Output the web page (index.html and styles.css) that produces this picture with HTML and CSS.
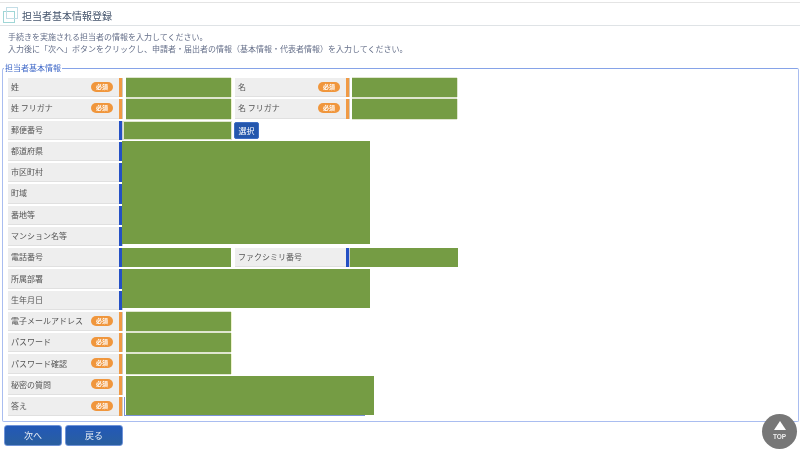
FILE: index.html
```html
<!DOCTYPE html>
<html lang="ja">
<head>
<meta charset="utf-8">
<title>担当者基本情報登録</title>
<link rel="stylesheet" href="styles.css">
</head>
<body>
<header class="page-head">
  <svg class="head-icon" width="15" height="17" viewBox="0 0 15 17" aria-hidden="true">
    <rect x="0.5" y="4.5" width="11" height="11" fill="none" stroke="#9fd6d6"/>
    <rect x="3.5" y="0.5" width="11" height="11" fill="none" stroke="#c3dde6"/>
  </svg>
  <h1 class="title">担当者基本情報登録</h1>
</header>
<div class="intro">
  <p>手続きを実施される担当者の情報を入力してください。</p>
  <p>入力後に「次へ」ボタンをクリックし、申請者・届出者の情報（基本情報・代表者情報）を入力してください。</p>
</div>
<fieldset class="panel">
  <legend class="legend">担当者基本情報</legend>
  <div class="form-grid">
    <div class="label r1"><span>姓</span><b class="req">必須</b></div><i class="mark must r1"></i><div class="fill f-short r1"></div>
    <div class="label c2 r1"><span>名</span><b class="req">必須</b></div><i class="mark must c2m r1"></i><div class="fill f-right r1"></div>

    <div class="label r2"><span>姓 フリガナ</span><b class="req">必須</b></div><i class="mark must r2"></i><div class="fill f-short r2"></div>
    <div class="label c2 r2"><span>名 フリガナ</span><b class="req">必須</b></div><i class="mark must c2m r2"></i><div class="fill f-right r2"></div>

    <div class="label r3"><span>郵便番号</span></div><i class="mark opt r3"></i><div class="fill f-zip r3"></div>
    <div class="btn-cell r3"><button class="pick" type="button">選択</button></div>

    <div class="label r4"><span>都道府県</span></div><i class="mark opt r4"></i>
    <div class="label r5"><span>市区町村</span></div><i class="mark opt r5"></i>
    <div class="label r6"><span>町域</span></div><i class="mark opt r6"></i>
    <div class="label r7"><span>番地等</span></div><i class="mark opt r7"></i>
    <div class="label r8"><span>マンション名等</span></div><i class="mark opt r8"></i>
    <div class="fill f-address"></div>

    <div class="label r9"><span>電話番号</span></div><i class="mark opt r9"></i><div class="fill f-tel r9"></div>
    <div class="label c2 r9"><span>ファクシミリ番号</span></div><i class="mark opt c2m r9"></i><div class="fill f-fax r9"></div>

    <div class="label r10"><span>所属部署</span></div><i class="mark opt r10"></i>
    <div class="label r11"><span>生年月日</span></div><i class="mark opt r11"></i>
    <div class="fill f-dept"></div>

    <div class="label r12"><span>電子メールアドレス</span><b class="req">必須</b></div><i class="mark must r12"></i><div class="fill f-short r12"></div>
    <div class="label r13"><span>パスワード</span><b class="req">必須</b></div><i class="mark must r13"></i><div class="fill f-short r13"></div>
    <div class="label r14"><span>パスワード確認</span><b class="req">必須</b></div><i class="mark must r14"></i><div class="fill f-short r14"></div>

    <div class="label r15"><span>秘密の質問</span><b class="req">必須</b></div><i class="mark must r15"></i>
    <div class="label r16"><span>答え</span><b class="req">必須</b></div><i class="mark must r16"></i>
    <div class="answer-edge"></div>
    <div class="fill f-secret"></div>
  </div>
</fieldset>
<div class="actions">
  <button class="nav-btn" type="button">次へ</button>
  <button class="nav-btn" type="button">戻る</button>
</div>
<a class="to-top" href="#"><span class="top-arrow"></span><span class="top-text">TOP</span></a>
</body>
</html>
```
FILE: styles.css
```css
* { box-sizing: border-box; }
html, body { margin: 0; height: 451px; overflow: hidden; background: #fff; }
body {
  position: relative;
  font-family: "Noto Sans CJK JP", "Noto Sans", sans-serif;
  font-size: 8px;
  color: #555;
  padding-top: 2px;
  filter: blur(0.35px);
}
.page-head {
  display: flex;
  align-items: center;
  gap: 4px;
  height: 24px;
  padding: 3px 0 0 3px;
  border-top: 1px solid #e4e4e4;
  border-bottom: 1px solid #dfe3e6;
}
.head-icon { flex: none; }
.title { margin: 0; font-size: 10px; font-weight: 400; line-height: 14px; color: #44546c; }
.intro { padding: 5px 0 0 8px; height: 38px; color: #66708a; }
.intro p { margin: 0; height: 12px; line-height: 12px; font-size: 8px; }
.panel {
  margin: 0 1px 0 2px;
  padding: 0 0 0 5px;
  height: 358px;
  border: 1px solid #a9bdf0;
  border-top-color: #86a3e8;
  border-radius: 2px;
}
.legend { margin-left: -4px; padding: 0 1px; font-size: 8px; line-height: 8px; height: 8px; color: #3f68c8; }
.form-grid {
  display: grid;
  grid-template-columns: 111px 3px 3px 106px 4px 111px 3px 2px 106px;
  grid-auto-rows: 19.27px;
  row-gap: 2px;
  margin-top: 6px;
}
.label {
  grid-column: 1;
  display: flex;
  align-items: center;
  justify-content: space-between;
  padding: 0 6px 1px 3px;
  background: #eee;
  border-bottom: 1px solid #e0e0e0;
  color: #555;
  white-space: nowrap;
}
.label.c2 { grid-column: 6; }
.mark { grid-column: 2; display: block; }
.mark.c2m { grid-column: 7; }
.must { background: #f09a45; box-shadow: 1px 0 0 #d2cabe; }
.opt { background: #2450c4; box-shadow: 1px 0 0 #c9ccd2; }
.req {
  width: 22px;
  height: 10px;
  border-radius: 5px;
  background: #f0963c;
  color: #fff;
  font-size: 6px;
  font-weight: 700;
  line-height: 10px;
  text-align: center;
}
.fill { background: #759c44; }
.f-short { grid-column: 4; margin-left: 1px; box-shadow: 1px 0 0 #eef2cc, 0 1px 0 #dfe6cf, 0 -1px 0 #dfe6cf; }
.f-right { grid-column: 9; margin-left: 1px; box-shadow: 1px 0 0 #dfe6cf, 0 1px 0 #dfe6cf, 0 -1px 0 #dfe6cf; }
.f-zip { grid-column: 3 / 5; margin: 1px 0 1px 2px; box-shadow: 0 0 0 1px #dfe6cf; }
.f-address { grid-column: 3 / 10; grid-row: 4 / 9; margin: -1px 87px 2px 0; }
.f-tel { grid-column: 3 / 5; }
.f-fax { grid-column: 8 / 10; margin-right: -1px; margin-left: 1px; }
.f-dept { grid-column: 3 / 10; grid-row: 10 / 12; margin: 0 87px 2px 0; }
.f-secret { grid-column: 4 / 10; grid-row: 15 / 17; margin: 0 83px 1px 1px; z-index: 1; }
.answer-edge {
  grid-column: 4 / 10;
  grid-row: 16;
  margin: 0 92px 0 -1px;
  border-left: 1px solid #7b93d8;
  border-bottom: 1px solid #7b93d8;
}
.r1 { grid-row: 1; } .r2 { grid-row: 2; } .r3 { grid-row: 3; } .r4 { grid-row: 4; }
.r5 { grid-row: 5; } .r6 { grid-row: 6; } .r7 { grid-row: 7; } .r8 { grid-row: 8; }
.r9 { grid-row: 9; } .r10 { grid-row: 10; } .r11 { grid-row: 11; } .r12 { grid-row: 12; }
.r13 { grid-row: 13; } .r14 { grid-row: 14; } .r15 { grid-row: 15; } .r16 { grid-row: 16; }
.btn-cell { grid-column: 6; display: flex; align-items: center; margin-left: -1px; }
.pick {
  width: 25px;
  height: 17px;
  padding: 0;
  border: 1px solid #3f6fc4;
  border-radius: 2px;
  background: #2457ad;
  color: #fff;
  font: 8px "Noto Sans CJK JP", sans-serif;
}
.actions { display: flex; gap: 3px; padding: 3px 0 0 4px; }
.nav-btn {
  width: 58px;
  height: 21px;
  padding: 0;
  border: 1px solid #6f93d8;
  border-radius: 3px;
  background: linear-gradient(#2258b8, #2a5f9f);
  color: #e6ecf5;
  font: 9px "Noto Sans CJK JP", sans-serif;
}
.to-top {
  position: absolute;
  left: 762px;
  top: 414px;
  width: 35px;
  height: 35px;
  border-radius: 50%;
  background: #777;
  display: flex;
  flex-direction: column;
  align-items: center;
  padding-top: 7px;
  text-decoration: none;
}
.top-arrow {
  width: 0;
  height: 0;
  border-left: 6px solid transparent;
  border-right: 6px solid transparent;
  border-bottom: 9px solid #fff;
}
.top-text { font: 700 6.5px/9px "Liberation Sans", sans-serif; color: #eee; margin-top: 2px; }
```
